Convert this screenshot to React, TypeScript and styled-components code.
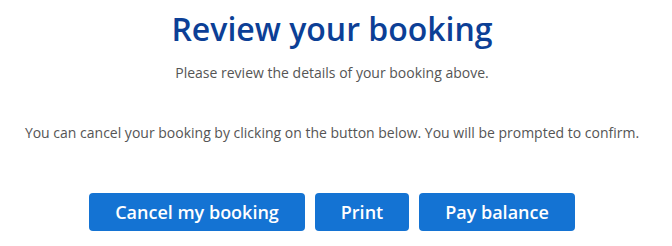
import React from "react";
import styled, { createGlobalStyle } from "styled-components";

const Global = createGlobalStyle`
  html, body { margin: 0; padding: 0; background: #ffffff; }
  body { font-family: "Open Sans", "Noto Sans", sans-serif; }
`;

const Page = styled.main`
  display: flex;
  flex-direction: column;
  align-items: center;
  padding: 7px 8px 0 0;
  text-align: center;
`;

const Title = styled.h1`
  margin: 0;
  font-size: 32px;
  font-weight: 600;
  line-height: 44px;
  color: #0c3f96;
`;

const Text = styled.p<{ $gap: number }>`
  margin: ${(p) => p.$gap}px 0 0;
  font-size: 14px;
  line-height: 18px;
  color: #555555;
`;

const Actions = styled.div`
  display: flex;
  gap: 10px;
  margin-top: 51px;
`;

const Button = styled.button<{ $w: number }>`
  width: ${(p) => p.$w}px;
  height: 38px;
  border: none;
  border-radius: 4px;
  background: #1473d3;
  color: #ffffff;
  font-family: "Open Sans", "Noto Sans", sans-serif;
  font-size: 18px;
  font-weight: 600;
  padding: 0;
  cursor: pointer;
`;

export default function App() {
  return (
    <>
      <Global />
      <Page>
        <Title>Review your booking</Title>
        <Text $gap={13}>Please review the details of your booking above.</Text>
        <Text $gap={42}>
          You can cancel your booking by clicking on the button below. You will be prompted to confirm.
        </Text>
        <Actions>
          <Button $w={216}>Cancel my booking</Button>
          <Button $w={94}>Print</Button>
          <Button $w={156}>Pay balance</Button>
        </Actions>
      </Page>
    </>
  );
}
